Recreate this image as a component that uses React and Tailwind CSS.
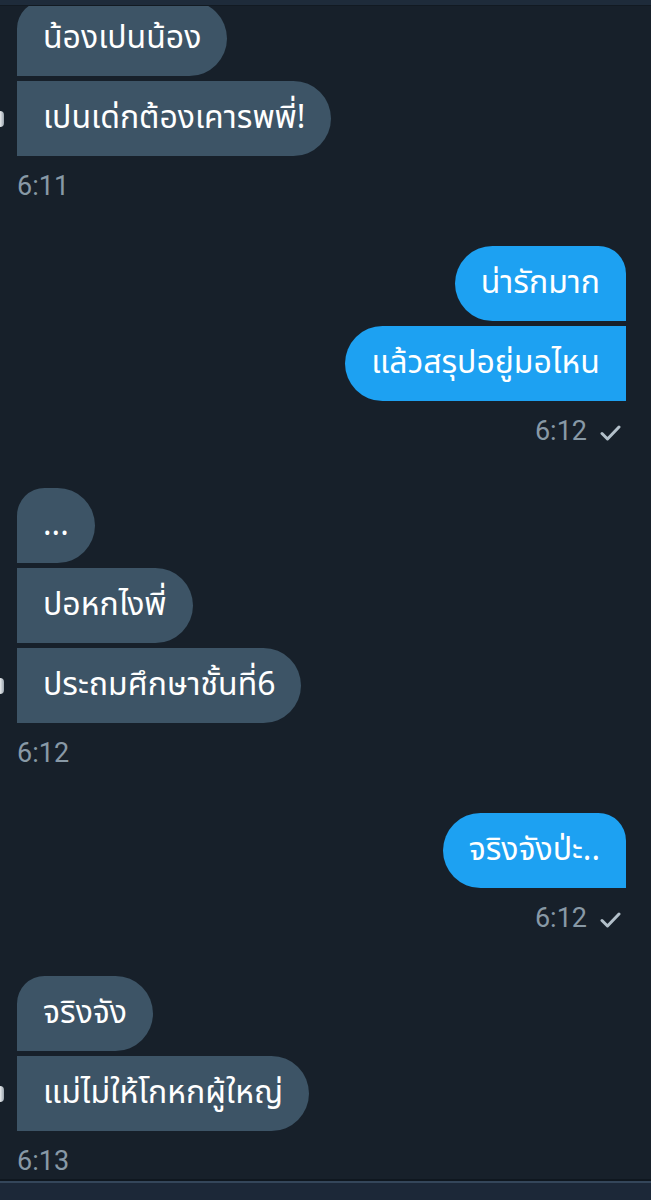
import { Fragment } from "react";

const thai = { fontFamily: '"Noto Sans Thai", "Noto Sans Thai UI", "Noto Sans", Roboto, sans-serif' };

const groups = [
  { from: "them", time: "6:11", gap: "mt-[-5px]", msgs: ["น้องเปนน้อง", "เปนเด่กต้องเคารพพี่!"] },
  { from: "me", time: "6:12", gap: "mt-[45px]", msgs: ["น่ารักมาก", "แล้วสรุปอยู่มอไหน"] },
  { from: "them", time: "6:12", gap: "mt-[42px]", msgs: ["...", "ปอหกไงพี่", "ประถมศึกษาชั้นที่6"] },
  { from: "me", time: "6:12", gap: "mt-[45px]", msgs: ["จริงจังป่ะ.."] },
  { from: "them", time: "6:13", gap: "mt-[43px]", msgs: ["จริงจัง", "แม่ไม่ให้โกหกผู้ใหญ่"] },
];

const Check = () => (
  <svg width="21" height="16" viewBox="0 0 21 16" className="ml-[13px] mt-[3px]">
    <path d="M2 8.5 L7.5 14 L19 2" fill="none" stroke="#b3c0ca" strokeWidth="3" strokeLinecap="round" strokeLinejoin="round" />
  </svg>
);

const Bubble = ({ text, mine, first, last }) => {
  const shape = mine
    ? `rounded-l-[38px] ${first ? "rounded-tr-[28px]" : ""}`
    : `rounded-r-[38px] ${first ? "rounded-tl-[28px]" : ""}`;
  return (
    <div className={`relative flex ${mine ? "justify-end" : "justify-start"}`}>
      {!mine && last && (
        <div className="absolute left-[-17px] top-1/2 -translate-y-1/2 w-[4px] h-[16px] rounded-r-full bg-gradient-to-r from-[#e6e9ec] to-[#9aa4ad]" />
      )}
      <div
        className={`h-[75px] flex items-center px-[26px] text-[32px] text-white ${shape} ${
          mine ? "bg-[#1da1f2]" : "bg-[#3d5466]"
        }`}
        style={thai}
      >
        <span className="leading-none pb-[2px]">{text}</span>
      </div>
    </div>
  );
};

export default function App() {
  return (
    <div className="w-[651px] h-[1200px] bg-[#17202a] flex flex-col overflow-hidden">
      <div className="h-[6px] bg-[#1e2b3a] border-b border-[#121a22] relative z-10 shrink-0" />
      <div className="flex-1 overflow-hidden pl-[17px] pr-[25px]">
        {groups.map((g, gi) => {
          const mine = g.from === "me";
          return (
            <div key={gi} className={g.gap}>
              <div className="flex flex-col gap-[5px]">
                {g.msgs.map((m, i) => (
                  <Bubble key={i} text={m} mine={mine} first={i === 0} last={i === g.msgs.length - 1} />
                ))}
              </div>
              <div
                className={`mt-[15px] h-[30px] flex items-center text-[27px] leading-[30px] text-[#8899a6] ${
                  mine ? "justify-end pr-[5px]" : "justify-start pl-[0px]"
                }`}
                style={{ fontFamily: "Roboto, sans-serif" }}
              >
                <span>{g.time}</span>
                {mine && <Check />}
              </div>
            </div>
          );
        })}
      </div>
      <div className="h-[19px] shrink-0 bg-[#1c2838] border-t-2 border-[#34465a] shadow-[0_-2px_0_#0f171f]" />
    </div>
  );
}
